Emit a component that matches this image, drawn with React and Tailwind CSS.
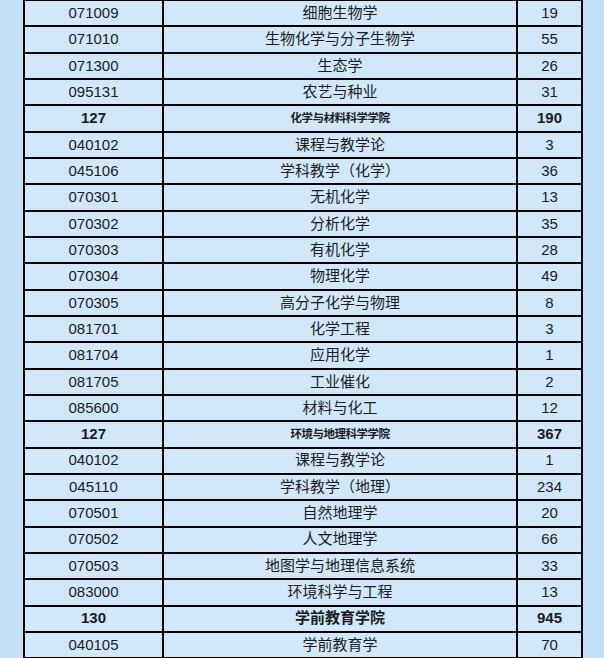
import React from "react";

const rows = [
  ["071009", "细胞生物学", "19"],
  ["071010", "生物化学与分子生物学", "55"],
  ["071300", "生态学", "26"],
  ["095131", "农艺与种业", "31"],
  ["127", "化学与材料科学学院", "190", "small"],
  ["040102", "课程与教学论", "3"],
  ["045106", "学科教学（化学）", "36"],
  ["070301", "无机化学", "13"],
  ["070302", "分析化学", "35"],
  ["070303", "有机化学", "28"],
  ["070304", "物理化学", "49"],
  ["070305", "高分子化学与物理", "8"],
  ["081701", "化学工程", "3"],
  ["081704", "应用化学", "1"],
  ["081705", "工业催化", "2"],
  ["085600", "材料与化工", "12"],
  ["127", "环境与地理科学学院", "367", "small"],
  ["040102", "课程与教学论", "1"],
  ["045110", "学科教学（地理）", "234"],
  ["070501", "自然地理学", "20"],
  ["070502", "人文地理学", "66"],
  ["070503", "地图学与地理信息系统", "33"],
  ["083000", "环境科学与工程", "13"],
  ["130", "学前教育学院", "945", "big"],
  ["040105", "学前教育学", "70"],
];

export default function App() {
  return (
    <div
      className="w-[604px] h-[658px] overflow-hidden bg-[#c5e1f7] text-[#1c1c1c]"
      style={{ fontFamily: '"Liberation Sans", "Noto Sans CJK SC", sans-serif' }}
    >
      <div className="ml-[23px] -mt-px w-[560px] border-l-2 border-t-2 border-black bg-[#d1e8fb]">
        {rows.map(([code, name, num, kind], i) => {
          const bold = kind === "small" || kind === "big";
          return (
            <div key={i} className="flex h-[26.33px] border-b-2 border-black">
              <div
                className={`flex w-[139px] items-center justify-center border-r-2 border-black text-[15px] ${
                  bold ? "font-bold" : ""
                }`}
              >
                {code}
              </div>
              <div
                className={`flex w-[354px] items-center justify-center border-r-2 border-black ${
                  kind === "small"
                    ? "text-[11.5px] font-bold tracking-[-0.5px]"
                    : kind === "big"
                    ? "text-[15px] font-bold"
                    : "text-[15px]"
                }`}
              >
                {name}
              </div>
              <div
                className={`flex w-[65px] items-center justify-center border-r-2 border-black text-[15px] ${
                  bold ? "font-bold" : ""
                }`}
              >
                {num}
              </div>
            </div>
          );
        })}
      </div>
    </div>
  );
}
